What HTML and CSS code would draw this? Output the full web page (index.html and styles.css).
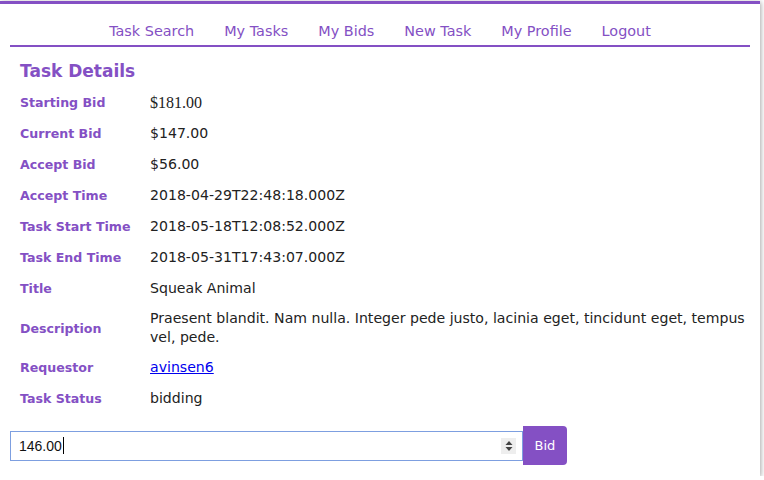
FILE: index.html
```html
<!DOCTYPE html>
<html>
<head>
<meta charset="utf-8">
<link rel="stylesheet" href="styles.css">
</head>
<body>
<div class="card">
  <nav class="nav">
    <a class="nav-link">Task Search</a>
    <a class="nav-link">My Tasks</a>
    <a class="nav-link">My Bids</a>
    <a class="nav-link">New Task</a>
    <a class="nav-link">My Profile</a>
    <a class="nav-link">Logout</a>
  </nav>
  <main class="content">
    <h1 class="title">Task Details</h1>
    <table class="details">
      <tr><th>Starting Bid</th><td class="serif">$181.00</td></tr>
      <tr><th>Current Bid</th><td>$147.00</td></tr>
      <tr><th>Accept Bid</th><td>$56.00</td></tr>
      <tr><th>Accept Time</th><td>2018-04-29T22:48:18.000Z</td></tr>
      <tr><th>Task Start Time</th><td>2018-05-18T12:08:52.000Z</td></tr>
      <tr><th>Task End Time</th><td>2018-05-31T17:43:07.000Z</td></tr>
      <tr><th>Title</th><td>Squeak Animal</td></tr>
      <tr class="desc"><th>Description</th><td>Praesent blandit. Nam nulla. Integer pede justo, lacinia eget, tincidunt eget, tempus vel, pede.</td></tr>
      <tr><th>Requestor</th><td><a class="link" href="#">avinsen6</a></td></tr>
      <tr><th>Task Status</th><td>bidding</td></tr>
    </table>
  </main>
  <form class="bid-form">
    <div class="input-box">
      <span class="input-text">146.00<span class="caret"></span></span>
      <span class="spinner">
        <svg width="8" height="12" viewBox="0 0 8 12"><path d="M4 1 L7.5 5 H0.5 Z M4 11 L7.5 7 H0.5 Z" fill="#444"/></svg>
      </span>
    </div>
    <button class="bid-btn" type="button">Bid</button>
  </form>
</div>
</body>
</html>
```
FILE: styles.css
```css
html, body {
  margin: 0;
  padding: 0;
  background: #fff;
}
body {
  padding-top: 1px;
  font-family: "DejaVu Sans", sans-serif;
}
.card {
  width: 760px;
  height: 475px;
  border-top: 3px solid #8450c4;
  background: #fff;
  box-shadow: 1px 1px 5px rgba(0,0,0,0.35);
  box-sizing: border-box;
  padding: 0 10px;
}
.nav {
  display: flex;
  justify-content: center;
  border-bottom: 2px solid #8450c4;
  padding-top: 18px;
  height: 23px;
}
.nav-link {
  color: #8450c4;
  font-size: 14.4px;
  line-height: 19px;
  padding: 0 15px;
}
.content {
  padding: 0 0 0 10px;
}
.title {
  margin: 13px 0 5px;
  font-size: 17px;
  line-height: 22px;
  color: #8450c4;
  font-weight: bold;
}
.details {
  border-collapse: collapse;
  width: 100%;
}
.details th {
  text-align: left;
  color: #8450c4;
  font-size: 12.6px;
  font-weight: bold;
  width: 130px;
  padding: 6px 0;
  line-height: 19px;
  vertical-align: middle;
  white-space: nowrap;
}
.details td {
  color: #222;
  font-size: 14.1px;
  line-height: 19px;
  padding: 6px 0;
}
.details .desc td {
  padding: 5px 0;
}
.details td.serif {
  font-family: "Liberation Serif", serif;
  font-size: 16px;
}
.link {
  color: #0000ee;
  text-decoration: underline;
}
.bid-form {
  display: flex;
  align-items: center;
  margin-top: 12px;
}
.input-box {
  width: 513px;
  height: 30px;
  box-sizing: border-box;
  border: 1px solid #7d9fe0;
  display: flex;
  align-items: center;
  justify-content: space-between;
  padding: 0 6px 0 8px;
}
.input-text {
  font-family: "Liberation Sans", sans-serif;
  font-size: 14px;
  color: #111;
  display: flex;
  align-items: center;
}
.caret {
  display: inline-block;
  width: 1px;
  height: 17px;
  background: #000;
  margin-left: 1px;
}
.spinner {
  width: 15px;
  height: 16px;
  background: #eee;
  display: flex;
  align-items: center;
  justify-content: center;
}
.bid-btn {
  width: 44px;
  height: 39px;
  border: none;
  background: #8450c4;
  color: #fff;
  font-family: "DejaVu Sans", sans-serif;
  font-size: 13px;
  border-radius: 0 4px 4px 0;
  padding: 0;
}
```
